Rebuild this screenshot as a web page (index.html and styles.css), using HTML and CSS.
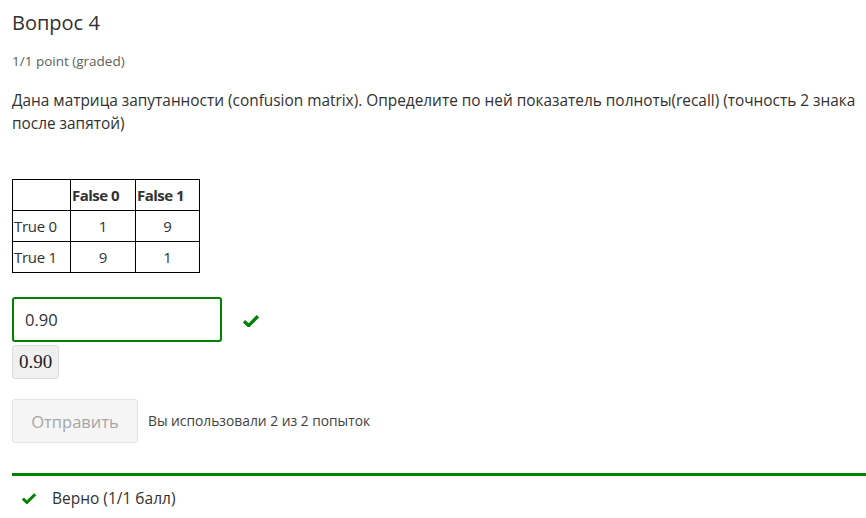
FILE: index.html
```html
<!DOCTYPE html>
<html>
<head>
<meta charset="utf-8">
<link rel="stylesheet" href="styles.css">
</head>
<body>
<div class="problem">
  <h3 class="title">Вопрос 4</h3>
  <div class="points">1/1 point (graded)</div>
  <p class="question">Дана матрица запутанности (confusion matrix). Определите по ней показатель полноты(recall) (точность 2 знака после запятой)</p>
  <table class="matrix">
    <tr><th></th><th>False 0</th><th>False 1</th></tr>
    <tr><td class="rowh">True 0</td><td>1</td><td>9</td></tr>
    <tr><td class="rowh">True 1</td><td>9</td><td>1</td></tr>
  </table>
  <div class="answer-row">
    <div class="answer-input">0.90</div>
    <svg class="check" width="16" height="13" viewBox="0 0 16 13"><path d="M1 7.2 L5.6 11.6 L15 2.2" fill="none" stroke="#008100" stroke-width="3.4" stroke-linecap="butt" stroke-linejoin="miter"/></svg>
  </div>
  <div class="preview">0.90</div>
  <div class="actions">
    <button class="submit">Отправить</button>
    <span class="attempts">Вы использовали 2 из 2 попыток</span>
  </div>
  <div class="result">
    <svg class="check small" width="14" height="12" viewBox="0 0 16 13"><path d="M1 7.2 L5.6 11.6 L15 2.2" fill="none" stroke="#008100" stroke-width="3.4"/></svg>
    <span class="result-text">Верно (1/1 балл)</span>
  </div>
</div>
</body>
</html>
```
FILE: styles.css
```css
html, body {
  margin: 0;
  padding: 0;
  background: #fff;
}
body {
  font-family: "Open Sans", "DejaVu Sans", sans-serif;
  color: #313131;
}
.problem {
  padding: 0 0 0 12px;
}
.title {
  margin: 0;
  padding-top: 9px;
  font-size: 20px;
  font-weight: 400;
  line-height: 28px;
  color: #313131;
}
.points {
  margin-top: 15px;
  font-size: 13.5px;
  line-height: 18px;
  color: #5e5e5e;
}
.question {
  margin: 19px 0 0 0;
  font-size: 15.4px;
  line-height: 23px;
  color: #313131;
  padding-right: 0;
}
.matrix {
  margin-top: 44px;
  border-collapse: collapse;
  font-size: 15px;
  color: #313131;
}
.matrix th, .matrix td {
  border: 1px solid #000;
  height: 30px;
  padding: 0 1px;
}
.matrix th {
  font-weight: 700;
  text-align: left;
  letter-spacing: -0.5px;
}
.matrix th:first-child { width: 55px; }
.matrix th:nth-child(2) { width: 62px; }
.matrix th:nth-child(3) { width: 61px; }
.matrix td { text-align: center; }
.matrix td.rowh { text-align: left; letter-spacing: -0.3px; }
.answer-row {
  margin-top: 24px;
  display: flex;
  align-items: center;
}
.answer-input {
  box-sizing: border-box;
  width: 210px;
  height: 45px;
  border: 2px solid #008100;
  border-radius: 3px;
  padding: 0 11px;
  font-size: 16.5px;
  line-height: 41px;
  color: #313131;
}
.check {
  margin-left: 21px;
  margin-top: 1px;
}
.preview {
  display: inline-block;
  margin-top: 3px;
  box-sizing: border-box;
  height: 34px;
  padding: 0 6px;
  background: #f0f0f0;
  border: 1px solid #dcdcdc;
  border-radius: 3px;
  font-family: "Liberation Serif", "DejaVu Serif", serif;
  font-size: 19px;
  line-height: 32px;
  color: #222;
}
.actions {
  margin-top: 20px;
  display: flex;
  align-items: center;
}
.submit {
  box-sizing: border-box;
  width: 126px;
  height: 44px;
  background: #f5f5f5;
  border: 1px solid #e3e3e3;
  border-radius: 3px;
  font-family: "Open Sans", sans-serif;
  font-size: 16.5px;
  color: #a6a6a6;
  padding: 0;
}
.attempts {
  margin-left: 10px;
  font-size: 13.8px;
  color: #414141;
  margin-top: -2px;
}
.result {
  margin-top: 30px;
  border-top: 3px solid #008100;
  display: flex;
  align-items: center;
  padding: 11px 0 0 10px;
}
.check.small {
  margin: 0;
}
.result-text {
  margin-left: 16px;
  font-size: 15.5px;
  color: #313131;
}
```
